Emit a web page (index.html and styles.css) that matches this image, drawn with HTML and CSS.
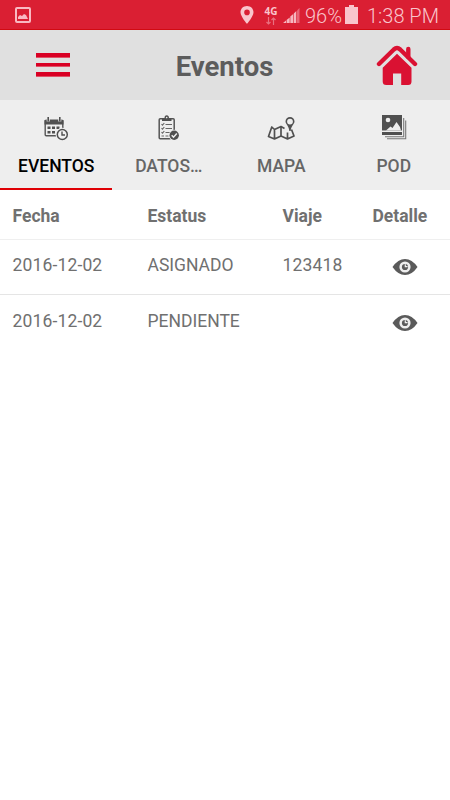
FILE: index.html
```html
<!DOCTYPE html>
<html lang="es">
<head>
<meta charset="utf-8">
<title>Eventos</title>
<link rel="stylesheet" href="styles.css">
</head>
<body>
<div class="status">
  <svg class="shot" width="16" height="16" viewBox="0 0 16 16"><rect x="1" y="1" width="14" height="14" rx="1" fill="none" stroke="#f9b9c2" stroke-width="2"/><path d="M3 12V10L5 8L7 9L9 7L11 8L13 12Z" fill="#f9b9c2"/></svg>
  <svg class="pin" width="14" height="18" viewBox="0 0 14 18"><path fill="#f9c5cc" fill-rule="evenodd" d="M7 0C3.100 0 .5 2.900.5 6.300C.5 10.500 7 18 7 18S13.500 10.500 13.500 6.300C13.500 2.900 10.900 0 7 0ZM7 3.600A2.800 2.800 0 1 1 7 9.200A2.800 2.800 0 0 1 7 3.600Z"/></svg>
  <div class="net"><span>4G</span>
    <svg width="10" height="8" viewBox="0 0 10 8" fill="none" stroke="#e9707f" stroke-width="1.200"><path d="M2.500 0V7M.5 5L2.500 7L4.500 5M7.500 8V1M5.500 3L7.500 1L9.500 3"/></svg>
  </div>
  <svg class="signal" width="17" height="16" viewBox="0 0 17 16"><path fill="#f6b6bf" d="M0 15L3 12.500V15ZM3.600 12L6.700 9.500V15H3.600ZM7.300 8.500L10.200 6V15H7.300ZM10.800 5.500L13.300 3V15H10.800Z"/><path fill="#e86576" d="M14 2.500L16.500 0V15H14Z"/></svg>
  <span class="pct">96%</span>
  <svg class="battery" width="13" height="19" viewBox="0 0 13 19"><path fill="#f9c5cc" d="M4 0H9V2H13V19H0V2H4Z"/></svg>
  <span class="clock">1:38 PM</span>
</div>
<header class="bar">
  <div class="menu"><i></i><i></i><i></i></div>
  <h1>Eventos</h1>
  <svg class="home" width="42" height="42" viewBox="0 0 42 42"><path d="M3 20L17.800 5.500Q21 2.600 24.200 5.500L39 20" fill="none" stroke="#da1132" stroke-width="4.400" stroke-linecap="round"/><path d="M32.300 5V13" fill="none" stroke="#da1132" stroke-width="4.400" stroke-linecap="round"/><path fill="#da1132" d="M21 9.800L35.500 23.800V37.500Q35.500 41 32.200 41H25.200V29.500H17V41H10.200Q6.700 41 6.700 37.500V23.800Z"/></svg>
</header>
<nav class="tabs">
  <a class="tab active">
    <svg width="28" height="28" viewBox="0 0 28 28"><rect x="3.200" y="6.200" width="17.600" height="15.600" rx="1" fill="none" stroke="#555" stroke-width="1.400"/><path fill="#505050" d="M2.500 6H21.500V10.500H2.500ZM5.500 12.500H8.500V15H5.500ZM10 12.500H13V15H10ZM14.500 12.500H17.500V15H14.500ZM5.500 17H8.500V19.500H5.500ZM10 17H13V19.500H10Z"/><path d="M6.200 4V7.500M17.800 4V7.500" stroke="#eee" stroke-width="3"/><path d="M6.200 3V7.500M17.800 3V7.500" stroke="#505050" stroke-width="1.600"/><circle cx="20.300" cy="20.500" r="6.700" fill="#eee"/><circle cx="20.300" cy="20.500" r="5" fill="#f2f2f2" stroke="#505050" stroke-width="1.500"/><path d="M20 17.500V21H23" fill="none" stroke="#505050" stroke-width="1.400"/></svg>
    <span>EVENTOS</span></a>
  <a class="tab">
    <svg width="28" height="28" viewBox="0 0 28 28"><rect x="4.200" y="4.700" width="15" height="20" rx="1" fill="none" stroke="#555" stroke-width="1.500"/><path fill="#505050" d="M7 7V4H9.500Q9.500 1.300 11.700 1.300T14 4H16.500V7Z"/><circle cx="11.700" cy="3.600" r=".8" fill="#eee"/><path d="M6.500 10.200L7.500 11.200L9.300 9M6.500 14.200L7.500 15.200L9.300 13M6.500 18.200L7.500 19.200L9.300 17M6.500 22H9M10.500 10.500H17M10.500 14.500H17M10.500 18.500H15.500M10.500 22H13.500" stroke="#666" stroke-width="1.100" fill="none"/><circle cx="19.200" cy="21.300" r="5.500" fill="#eee"/><circle cx="19.200" cy="21.300" r="4.700" fill="#505050"/><path d="M16.700 21.300L18.500 23.200L21.800 19.500" fill="none" stroke="#eee" stroke-width="1.500"/></svg>
    <span>DATOS…</span></a>
  <a class="tab">
    <svg width="28" height="28" viewBox="0 0 28 28"><path d="M17.500 14.500L14 12.500L7.500 15.500L4.800 13L1.500 22.500L7.500 25L14 22L20.500 25L27 22L24.500 15.500M7.500 16V25M14 13V22M20.500 18.500V25" fill="none" stroke="#505050" stroke-width="1.700" stroke-linejoin="round"/><path fill="#505050" fill-rule="evenodd" d="M23 3A4.500 4.500 0 0 0 18.500 7.500C18.500 10 22 12 22.300 17H23.700C24 12 27.500 10 27.500 7.500A4.500 4.500 0 0 0 23 3ZM23 4.700A2.900 2.900 0 1 1 23 10.500A2.900 2.900 0 0 1 23 4.700Z"/></svg>
    <span>MAPA</span></a>
  <a class="tab">
    <svg width="28" height="28" viewBox="0 0 28 28"><path fill="#505050" d="M2 1H22V16.500H2ZM2 18H22V21H2Z"/><path fill="#eee" d="M6 16.500L10.500 12.500L12.500 14L16.500 8L20 13L21 16.500Z"/><circle cx="8" cy="6" r="2.300" fill="#eee"/><path d="M23.700 4V22.700H5M25.700 6.500V24.700H7" fill="none" stroke="#777" stroke-width="1.100"/></svg>
    <span>POD</span></a>
</nav>
<main class="table">
  <div class="row head"><span>Fecha</span><span>Estatus</span><span>Viaje</span><span>Detalle</span></div>
  <div class="row"><span class="date">2016-12-02</span><span>ASIGNADO</span><span class="date">123418</span>
    <svg class="eye" width="26" height="16" viewBox="0 0 26 16"><path fill="#5a5a5a" d="M.5 8Q6 0 13 0T25.500 8Q20 16 13 16T.5 8Z"/><circle cx="13" cy="8" r="5.600" fill="#eee"/><circle cx="13" cy="8" r="3.100" fill="#5a5a5a"/><path d="M13.300 5.200V7.700H15.600" fill="none" stroke="#eee" stroke-width="1.200"/></svg></div>
  <div class="row last"><span class="date">2016-12-02</span><span>PENDIENTE</span><span></span>
    <svg class="eye" width="26" height="16" viewBox="0 0 26 16"><path fill="#5a5a5a" d="M.5 8Q6 0 13 0T25.500 8Q20 16 13 16T.5 8Z"/><circle cx="13" cy="8" r="5.600" fill="#eee"/><circle cx="13" cy="8" r="3.100" fill="#5a5a5a"/><path d="M13.300 5.200V7.700H15.600" fill="none" stroke="#eee" stroke-width="1.200"/></svg></div>
</main>
</body>
</html>
```
FILE: styles.css
```css
* { box-sizing: border-box; }
body { margin: 0; background: #fff; font-family: Roboto, "Liberation Sans", sans-serif; color: #666; }
.status { height: 30px; display: flex; align-items: flex-start; background: #da1f33; border-bottom: 1px solid #d10a12; color: #f9c5cc; padding: 0 10px 0 15px; white-space: nowrap; }
.shot { margin-top: 7px; }
.pin { margin: 6px 0 0 209px; }
.net { width: 16px; margin: 7px 0 0 9px; display: flex; flex-direction: column; align-items: center; font: bold 10px/9px "Open Sans", sans-serif; }
.net svg { margin-top: 1px; }
.signal { margin: 8px 0 0 4px; }
.pct { width: 37px; margin-left: 5px; font-size: 20px; line-height: 32px; font-weight: 300; }
.battery { margin: 5px 0 0 3px; }
.clock { margin-left: 9px; font-size: 20px; line-height: 32px; font-weight: 300; }
.bar { height: 70px; background: #e0e0e0; display: grid; grid-template-columns: 36px 34px 1fr 42px 32px; align-items: center; }
.menu { grid-column: 2; display: flex; flex-direction: column; gap: 5px; }
.menu i { height: 4.500px; background: #d90024; border-bottom: 1px solid #df5368; }
.bar h1 { margin: 3px 0 0; padding-left: 3px; text-align: center; font-size: 27.500px; line-height: 32px; font-weight: 700; color: #5c5c5c; }
.home { margin-top: -1px; }
.tabs { height: 90px; background: #eee; display: grid; grid-template-columns: repeat(4, 1fr); }
.tab { display: flex; flex-direction: column; align-items: center; padding-top: 14px; font-size: 17.500px; font-weight: 500; line-height: 20px; color: #666; }
.tab span { margin-top: 14px; }
.active { color: #000; background: linear-gradient(#df0005, #df0005) left bottom / 112px 2px no-repeat; }
.row { height: 56px; padding: 15px 0 0 12.500px; display: grid; grid-template-columns: 135px 135px 90px 1fr; align-items: start; border-bottom: 1px solid #e5e5e5; font-size: 17.500px; line-height: 22px; font-weight: 400; color: #707070; }
.head { height: 50px; font-weight: 700; border-bottom-color: #efefef; }
.head + .row { height: 55px; padding-top: 14px; }
.last { border-bottom: 0; }
.date { letter-spacing: .150px; }
.eye { margin: 5px 0 0 19px; }
```
